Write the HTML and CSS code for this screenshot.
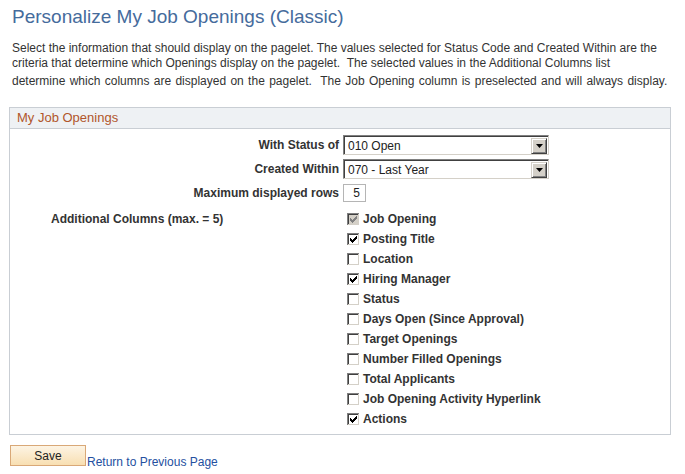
FILE: index.html
```html
<!DOCTYPE html>
<html lang="en">
<head>
  <meta charset="UTF-8" />
  <title>Personalize My Job Openings (Classic)</title>
  <link rel="stylesheet" href="styles.css">
</head>
<body>
  <h1 class="page-title">Personalize My Job Openings (Classic)</h1>

  <div class="intro">
    <span class="intro-line">Select the information that should display on the pagelet. The values selected for Status Code and Created Within are the</span>
    <span class="intro-line">criteria that determine which Openings display on the pagelet.&nbsp; The selected values in the Additional Columns list</span>
    <span class="intro-line last">determine which columns are displayed on the pagelet.&nbsp; The Job Opening column is preselected and will always display.</span>
  </div>

  <!-- Group box -->
  <div class="groupbox">
    <div class="groupbox-head">My Job Openings</div>
    <div class="groupbox-body">
      <div class="field-row">
        <span class="field-label">With Status of</span>
        <div class="dropdown">
          <span class="dropdown-value">010 Open</span>
          <span class="dropdown-btn"><svg width="7" height="4" viewBox="0 0 7 4"><path d="M0 0h7l-3.5 4z" fill="#000"/></svg></span>
        </div>
      </div>
      <div class="field-row">
        <span class="field-label">Created Within</span>
        <div class="dropdown">
          <span class="dropdown-value">070 - Last Year</span>
          <span class="dropdown-btn"><svg width="7" height="4" viewBox="0 0 7 4"><path d="M0 0h7l-3.5 4z" fill="#000"/></svg></span>
        </div>
      </div>
      <div class="field-row short">
        <span class="field-label">Maximum displayed rows</span>
        <span class="num-input">5</span>
      </div>

      <div class="columns-row">
        <span class="columns-label">Additional Columns (max. = 5)</span>
        <ul class="check-list" id="checkList"></ul>
      </div>
    </div>
  </div>

  <div class="actions">
    <button class="save-btn">Save</button>
    <a href="#" class="back-link">Return to Previous Page</a>
  </div>

  <script>
    const columns = [
      ["Job Opening", "disabled"],
      ["Posting Title", "on"],
      ["Location", "off"],
      ["Hiring Manager", "on"],
      ["Status", "off"],
      ["Days Open (Since Approval)", "off"],
      ["Target Openings", "off"],
      ["Number Filled Openings", "off"],
      ["Total Applicants", "off"],
      ["Job Opening Activity Hyperlink", "off"],
      ["Actions", "on"]
    ];

    // classic 7x7 check glyph, one 3px run per column
    const tick = "M3 5h1v3h-1z M4 6h1v3h-1z M5 7h1v3h-1z M6 6h1v3h-1z M7 5h1v3h-1z M8 4h1v3h-1z M9 3h1v3h-1z";

    function checkbox(state) {
      const fill = state === "disabled" ? "#d4d0c8" : "#fff";
      const mark = state === "disabled" ? "#808080" : "#000";
      return `
        <svg class="check-box" width="13" height="13" viewBox="0 0 13 13" shape-rendering="crispEdges">
          <rect x="0" y="0" width="13" height="13" fill="#fff"/>
          <rect x="0" y="0" width="12" height="12" fill="#d4d0c8"/>
          <rect x="0" y="0" width="12" height="1" fill="#808080"/>
          <rect x="0" y="0" width="1" height="12" fill="#808080"/>
          <rect x="1" y="1" width="10" height="1" fill="#404040"/>
          <rect x="1" y="1" width="1" height="10" fill="#404040"/>
          <rect x="2" y="2" width="9" height="9" fill="${fill}"/>
          ${state === "off" ? "" : `<path d="${tick}" fill="${mark}"/>`}
        </svg>`;
    }

    const list = document.getElementById("checkList");
    columns.forEach(([name, state]) => {
      const li = document.createElement("li");
      li.innerHTML = checkbox(state) + `<span class="check-label">${name}</span>`;
      list.appendChild(li);
    });
  </script>
</body>
</html>
```

FILE: styles.css
```css
body {
  font-family: "Liberation Sans", Arial, sans-serif;
  font-size: 12px;
  color: #333;
  background: #fff;
  margin: 0;
}
.page-title {
  font-size: 19px;
  font-weight: normal;
  line-height: 22px;
  color: #456b9c;
  margin: 6px 0 0 12px;
}
.intro {
  margin: 13px 0 0 12px;
}
.intro-line {
  display: block;
  line-height: 15px;
  white-space: nowrap;
}
.intro-line.last {
  margin-top: 3px;
  word-spacing: 1px;
}

.groupbox {
  margin: 18px 0 0 9px;
  width: 660px;
  border: 1px solid #c9ced4;
}
.groupbox-head {
  background: #eef1f4;
  border-bottom: 1px solid #c9ced4;
  color: #b1562b;
  font-size: 13px;
  line-height: 20px;
  padding-left: 7px;
}
.groupbox-body {
  padding: 6px 0 5px 0;
}
.field-row {
  display: flex;
  align-items: center;
  height: 20px;
  margin-bottom: 4px;
}
.field-row + .field-row {
  margin-bottom: 5px;
}
.field-row.short {
  height: 18px;
  margin-bottom: 7px;
}
.field-label {
  width: 329px;
  margin-right: 4px;
  text-align: right;
  font-weight: bold;
  line-height: 14px;
}
.dropdown {
  display: flex;
  align-items: center;
  justify-content: space-between;
  box-sizing: border-box;
  width: 206px;
  height: 20px;
  background: #fff;
  border: 1px solid;
  border-color: #808080 #d4d0c8 #d4d0c8 #808080;
  box-shadow: inset 1px 1px 0 #404040;
  padding: 1px 1px 0 4px;
}
.dropdown-value {
  color: #222;
}
.dropdown-btn {
  display: flex;
  align-items: center;
  justify-content: center;
  box-sizing: border-box;
  width: 16px;
  height: 16px;
  background: #d4d0c8;
  border: 1px solid;
  border-color: #d4d0c8 #404040 #404040 #d4d0c8;
  box-shadow: inset 1px 1px 0 #fff, inset -1px -1px 0 #808080;
}
.num-input {
  box-sizing: border-box;
  width: 23px;
  height: 18px;
  border: 1px solid #b5b5b5;
  text-align: right;
  padding-right: 5px;
  line-height: 16px;
  color: #222;
}

.columns-row {
  display: flex;
}
.columns-label {
  width: 292px;
  padding-left: 41px;
  font-weight: bold;
  line-height: 20px;
}
.check-list {
  list-style: none;
  margin: 0;
  padding: 0 0 0 4px;
}
.check-list li {
  display: flex;
  align-items: center;
  height: 20px;
}
.check-box {
  margin-right: 3px;
}
.check-label {
  font-weight: bold;
}

.actions {
  display: flex;
  align-items: flex-start;
  margin: 10px 0 0 10px;
}
.save-btn {
  width: 76px;
  height: 21px;
  font-family: inherit;
  font-size: 12px;
  color: #222;
  background: linear-gradient(#fdf4e4, #f8dfb2);
  border: 1px solid #d9a877;
  padding: 0;
  cursor: pointer;
}
.back-link {
  margin: 10px 0 0 1px;
  line-height: 15px;
  color: #2450a0;
  text-decoration: none;
}
```
